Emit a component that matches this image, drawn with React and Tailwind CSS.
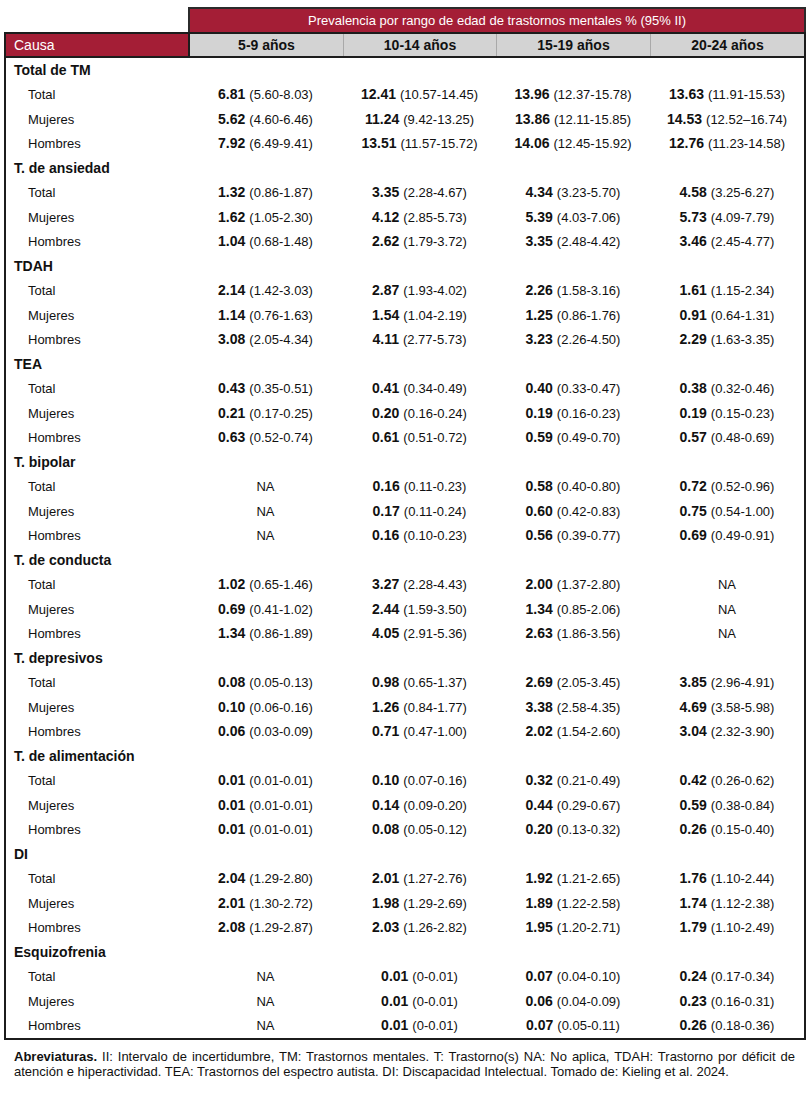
import React from 'react';

const groups = [
  {
    name: 'Total de TM',
    rows: [
      ['Total', ['6.81', '(5.60-8.03)'], ['12.41', '(10.57-14.45)'], ['13.96', '(12.37-15.78)'], ['13.63', '(11.91-15.53)']],
      ['Mujeres', ['5.62', '(4.60-6.46)'], ['11.24', '(9.42-13.25)'], ['13.86', '(12.11-15.85)'], ['14.53', '(12.52–16.74)']],
      ['Hombres', ['7.92', '(6.49-9.41)'], ['13.51', '(11.57-15.72)'], ['14.06', '(12.45-15.92)'], ['12.76', '(11.23-14.58)']],
    ],
  },
  {
    name: 'T. de ansiedad',
    rows: [
      ['Total', ['1.32', '(0.86-1.87)'], ['3.35', '(2.28-4.67)'], ['4.34', '(3.23-5.70)'], ['4.58', '(3.25-6.27)']],
      ['Mujeres', ['1.62', '(1.05-2.30)'], ['4.12', '(2.85-5.73)'], ['5.39', '(4.03-7.06)'], ['5.73', '(4.09-7.79)']],
      ['Hombres', ['1.04', '(0.68-1.48)'], ['2.62', '(1.79-3.72)'], ['3.35', '(2.48-4.42)'], ['3.46', '(2.45-4.77)']],
    ],
  },
  {
    name: 'TDAH',
    rows: [
      ['Total', ['2.14', '(1.42-3.03)'], ['2.87', '(1.93-4.02)'], ['2.26', '(1.58-3.16)'], ['1.61', '(1.15-2.34)']],
      ['Mujeres', ['1.14', '(0.76-1.63)'], ['1.54', '(1.04-2.19)'], ['1.25', '(0.86-1.76)'], ['0.91', '(0.64-1.31)']],
      ['Hombres', ['3.08', '(2.05-4.34)'], ['4.11', '(2.77-5.73)'], ['3.23', '(2.26-4.50)'], ['2.29', '(1.63-3.35)']],
    ],
  },
  {
    name: 'TEA',
    rows: [
      ['Total', ['0.43', '(0.35-0.51)'], ['0.41', '(0.34-0.49)'], ['0.40', '(0.33-0.47)'], ['0.38', '(0.32-0.46)']],
      ['Mujeres', ['0.21', '(0.17-0.25)'], ['0.20', '(0.16-0.24)'], ['0.19', '(0.16-0.23)'], ['0.19', '(0.15-0.23)']],
      ['Hombres', ['0.63', '(0.52-0.74)'], ['0.61', '(0.51-0.72)'], ['0.59', '(0.49-0.70)'], ['0.57', '(0.48-0.69)']],
    ],
  },
  {
    name: 'T. bipolar',
    rows: [
      ['Total', null, ['0.16', '(0.11-0.23)'], ['0.58', '(0.40-0.80)'], ['0.72', '(0.52-0.96)']],
      ['Mujeres', null, ['0.17', '(0.11-0.24)'], ['0.60', '(0.42-0.83)'], ['0.75', '(0.54-1.00)']],
      ['Hombres', null, ['0.16', '(0.10-0.23)'], ['0.56', '(0.39-0.77)'], ['0.69', '(0.49-0.91)']],
    ],
  },
  {
    name: 'T. de conducta',
    rows: [
      ['Total', ['1.02', '(0.65-1.46)'], ['3.27', '(2.28-4.43)'], ['2.00', '(1.37-2.80)'], null],
      ['Mujeres', ['0.69', '(0.41-1.02)'], ['2.44', '(1.59-3.50)'], ['1.34', '(0.85-2.06)'], null],
      ['Hombres', ['1.34', '(0.86-1.89)'], ['4.05', '(2.91-5.36)'], ['2.63', '(1.86-3.56)'], null],
    ],
  },
  {
    name: 'T. depresivos',
    rows: [
      ['Total', ['0.08', '(0.05-0.13)'], ['0.98', '(0.65-1.37)'], ['2.69', '(2.05-3.45)'], ['3.85', '(2.96-4.91)']],
      ['Mujeres', ['0.10', '(0.06-0.16)'], ['1.26', '(0.84-1.77)'], ['3.38', '(2.58-4.35)'], ['4.69', '(3.58-5.98)']],
      ['Hombres', ['0.06', '(0.03-0.09)'], ['0.71', '(0.47-1.00)'], ['2.02', '(1.54-2.60)'], ['3.04', '(2.32-3.90)']],
    ],
  },
  {
    name: 'T. de alimentación',
    rows: [
      ['Total', ['0.01', '(0.01-0.01)'], ['0.10', '(0.07-0.16)'], ['0.32', '(0.21-0.49)'], ['0.42', '(0.26-0.62)']],
      ['Mujeres', ['0.01', '(0.01-0.01)'], ['0.14', '(0.09-0.20)'], ['0.44', '(0.29-0.67)'], ['0.59', '(0.38-0.84)']],
      ['Hombres', ['0.01', '(0.01-0.01)'], ['0.08', '(0.05-0.12)'], ['0.20', '(0.13-0.32)'], ['0.26', '(0.15-0.40)']],
    ],
  },
  {
    name: 'DI',
    rows: [
      ['Total', ['2.04', '(1.29-2.80)'], ['2.01', '(1.27-2.76)'], ['1.92', '(1.21-2.65)'], ['1.76', '(1.10-2.44)']],
      ['Mujeres', ['2.01', '(1.30-2.72)'], ['1.98', '(1.29-2.69)'], ['1.89', '(1.22-2.58)'], ['1.74', '(1.12-2.38)']],
      ['Hombres', ['2.08', '(1.29-2.87)'], ['2.03', '(1.26-2.82)'], ['1.95', '(1.20-2.71)'], ['1.79', '(1.10-2.49)']],
    ],
  },
  {
    name: 'Esquizofrenia',
    rows: [
      ['Total', null, ['0.01', '(0-0.01)'], ['0.07', '(0.04-0.10)'], ['0.24', '(0.17-0.34)']],
      ['Mujeres', null, ['0.01', '(0-0.01)'], ['0.06', '(0.04-0.09)'], ['0.23', '(0.16-0.31)']],
      ['Hombres', null, ['0.01', '(0-0.01)'], ['0.07', '(0.05-0.11)'], ['0.26', '(0.18-0.36)']],
    ],
  },
];

const ages = ['5-9 años', '10-14 años', '15-19 años', '20-24 años'];
const cols = 'grid grid-cols-[182px_155px_153px_154px_1fr]';

const Value = ({ v }) =>
  v ? (
    <div className="flex items-center justify-center whitespace-nowrap">
      <span className="text-[14px] font-bold">{v[0]}</span>
      <span className="ml-[4px] text-[13px]">{v[1]}</span>
    </div>
  ) : (
    <div className="text-center text-[13px]">NA</div>
  );

export default function App() {
  return (
    <div className="min-h-[1093px] w-[810px] bg-white pt-[7px] text-[#111] font-['Liberation_Sans',Arial,sans-serif]">
      <div className="ml-[4px] w-[802px]">
        {/* top title band */}
        <div className="flex">
          <div className="w-[184px]" />
          <div className="flex h-[25px] flex-1 items-center justify-center border-2 border-b-0 border-[#2b2b2b] bg-[#a41e36] text-[13px] text-white">
            Prevalencia por rango de edad de trastornos mentales % (95% II)
          </div>
        </div>

        {/* column headers */}
        <div className={`${cols} h-[26px] border-2 border-[#1c1c1c]`}>
          <div className="flex items-center bg-[#a41e36] pl-[8px] text-[14px] text-white">Causa</div>
          {ages.map((a, i) => (
            <div
              key={a}
              className={`flex items-center justify-center bg-[#d3d3d3] text-[14px] font-bold ${
                i === 0 ? 'border-l-2 border-[#1c1c1c]' : 'border-l border-[#a9a9a9]'
              }`}
            >
              {a}
            </div>
          ))}
        </div>

        {/* body */}
        <div className="border-2 border-t-0 border-[#1c1c1c]">
          {groups.map((g) => (
            <div key={g.name}>
              <div className="flex h-[24.5px] items-center pl-[8px] text-[14px] font-bold">{g.name}</div>
              {g.rows.map((r) => (
                <div key={r[0]} className={`${cols} h-[24.5px] items-center`}>
                  <div className="pl-[22px] text-[13px]">{r[0]}</div>
                  <Value v={r[1]} />
                  <Value v={r[2]} />
                  <Value v={r[3]} />
                  <Value v={r[4]} />
                </div>
              ))}
            </div>
          ))}
        </div>
      </div>

      <p className="mt-[9px] pl-[14px] pr-[15px] text-justify text-[13px] leading-[15px]">
        <b className="font-bold">Abreviaturas.</b> II: Intervalo de incertidumbre, TM: Trastornos mentales. T:
        Trastorno(s) NA: No aplica, TDAH: Trastorno por déficit de atención e hiperactividad. TEA: Trastornos del
        espectro autista. DI: Discapacidad Intelectual. Tomado de: Kieling et al. 2024.
      </p>
    </div>
  );
}
